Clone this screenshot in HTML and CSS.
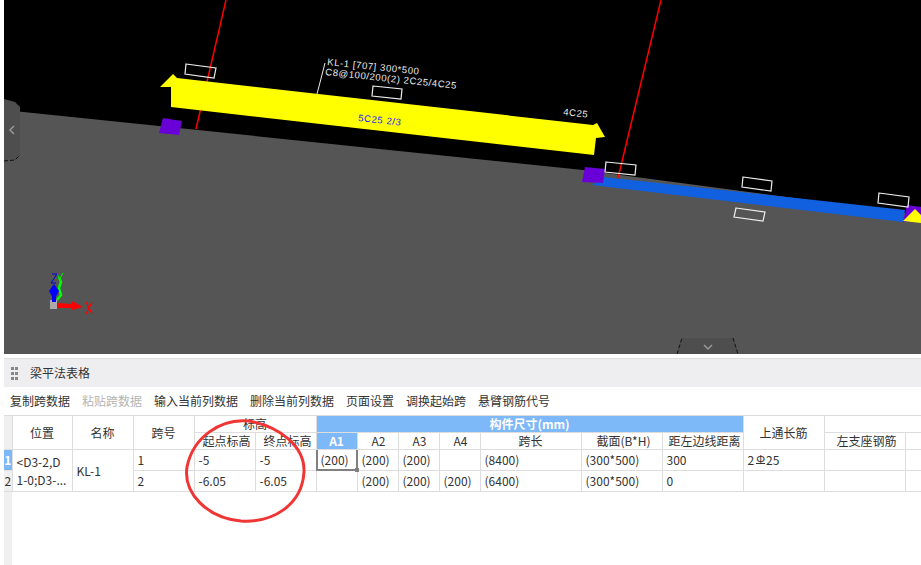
FILE: index.html
```html
<!DOCTYPE html>
<html lang="zh-CN">
<head>
<meta charset="UTF-8">
<title>梁平法表格</title>
<link rel="stylesheet" href="styles.css">
</head>
<body>
<div class="page">
  <!-- 3D view -->
  <svg class="scene" viewBox="4 0 917 354" width="917" height="354">
    <rect class="bg" x="4" y="0" width="917" height="354"/>
    <polygon class="floor" points="4,110 583,170 921,215 921,354 4,354"/>
    <line class="axis" x1="226" y1="0" x2="196" y2="129"/>
    <line class="axis" x1="661" y1="0" x2="618" y2="178"/>
    <polygon class="beam" points="160,87 173,74 177,78 593,125 597,123 605,137 596,138 594,155 171,107 171,87"/>
    <polygon class="beam-b" points="603,177 905,210 903,222 592,185"/>
    <polygon class="col" points="163,118 182,121 179,135 159,133"/>
    <polygon class="col" points="585,167 605,169 603,183 582,182"/>
    <polygon class="col" points="907,205 921,207 921,222 903,222"/>
    <polygon class="beam" points="903,221 915,209 921,215 921,223"/>
    <polygon class="box" points="186,64 216,68 214,78 185,74"/>
    <polygon class="box" points="373,86 402,89 401,99 372,96"/>
    <polygon class="box" points="606,162 636,165 635,175 605,172"/>
    <polygon class="box" points="743,177 772,181 771,191 742,187"/>
    <polygon class="box" points="879,193 909,197 908,207 878,203"/>
    <polygon class="box" points="736,208 765,212 763,221 734,217"/>
    <line class="leader" x1="325" y1="63" x2="317" y2="94"/>
    <text class="lbl" transform="translate(327 65) rotate(6)">KL-1 [707] 300*500</text>
    <text class="lbl" transform="translate(325 75) rotate(6)">C8@100/200(2) 2C25/4C25</text>
    <text class="lbl" transform="translate(563 115) rotate(6)">4C25</text>
    <text class="lbl lbl-b" transform="translate(358 121) rotate(6)">5C25 2/3</text>
    <!-- axis gizmo -->
    <rect class="giz-o" x="50" y="300" width="7" height="9"/>
    <polyline class="giz-y" points="57,300 61,295 59,288 61,282 59,277"/>
    <polyline class="giz-yl" points="57,274 60,278 63,273 60,278 60,282"/>
    <rect class="giz-z" x="52" y="296" width="4" height="6"/>
    <polygon class="giz-z" points="54,284 59,291 54,300 49,291"/>
    <polyline class="giz-zl" points="52,274 57,274 51,283 56,283"/>
    <polygon class="giz-x" points="57,303 72,304 72,301 83,307 72,310 72,308 57,308"/>
    <path class="giz-xl" d="M86 302 L92 314 M92 302 L86 314"/>
    <!-- side tabs -->
    <polygon class="tab" points="4,99 15,102 20,107 20,155 15,160 4,161"/>
    <path class="tab-edge" d="M4 161 L15 160 L20 155"/>
    <path class="chev" d="M14 126 L10 130 L14 134"/>
    <polygon class="tab" points="677,354 682,338 733,338 738,354"/>
    <path class="tab-edge" d="M677 354 L682 338 M733 338 L738 354"/>
    <path class="chev" d="M704 345 L708 349 L712 345"/>
  </svg>

  <div class="panel">
    <div class="panel-head">
      <div class="grip"><i></i><i></i><i></i><i></i><i></i><i></i></div>
      <span>梁平法表格</span>
    </div>
    <div class="toolbar">
      <span class="tool">复制跨数据</span>
      <span class="tool off">粘贴跨数据</span>
      <span class="tool">输入当前列数据</span>
      <span class="tool">删除当前列数据</span>
      <span class="tool">页面设置</span>
      <span class="tool">调换起始跨</span>
      <span class="tool">悬臂钢筋代号</span>
    </div>
    <table class="grid">
      <colgroup>
        <col class="c8"><col class="c60">
        <col class="c61"><col class="c61"><col class="c61"><col class="c61">
        <col class="c41"><col class="c41"><col class="c41"><col class="c41">
        <col class="c101">
        <col class="c81"><col class="c81"><col class="c81"><col class="c81"><col class="c81">
      </colgroup>
      <thead>
        <tr>
          <th class="rh" rowspan="2"></th>
          <th rowspan="2">位置</th>
          <th rowspan="2">名称</th>
          <th rowspan="2">跨号</th>
          <th colspan="2">标高</th>
          <th class="sel" colspan="7">构件尺寸(mm)</th>
          <th rowspan="2">上通长筋</th>
          <th colspan="2"></th>
        </tr>
        <tr>
          <th class="wide">起点标高</th>
          <th class="wide">终点标高</th>
          <th class="sel">A1</th>
          <th class="nudge">A2</th>
          <th class="nudge">A3</th>
          <th class="nudge">A4</th>
          <th>跨长</th>
          <th class="wide">截面(B*H)</th>
          <th class="wide">距左边线距离</th>
          <th class="wide">左支座钢筋</th>
          <th></th>
        </tr>
      </thead>
      <tbody>
        <tr>
          <td class="rh sel">1</td>
          <td class="pos" rowspan="2">&lt;D3-2,D<br>1-0;D3-...</td>
          <td rowspan="2">KL-1</td>
          <td>1</td>
          <td>-5</td>
          <td>-5</td>
          <td class="cur">(200)<div class="cursor"><b></b></div></td>
          <td>(200)</td>
          <td>(200)</td>
          <td></td>
          <td>(8400)</td>
          <td>(300*500)</td>
          <td>300</td>
          <td>2<span class="rebar">Φ</span>25</td>
          <td></td>
          <td></td>
        </tr>
        <tr>
          <td class="rh">2</td>
          <td>2</td>
          <td>-6.05</td>
          <td>-6.05</td>
          <td></td>
          <td>(200)</td>
          <td>(200)</td>
          <td>(200)</td>
          <td>(6400)</td>
          <td>(300*500)</td>
          <td>0</td>
          <td></td>
          <td></td>
          <td></td>
        </tr>
      </tbody>
    </table>
    <div class="gutter"></div>
  </div>

  <!-- hand drawn mark on top of the table -->
  <svg class="mark" width="130" height="110" viewBox="0 0 130 110">
    <path d="M68 4 C40 1 12 20 6 50 C2 76 26 101 60 104 C92 106 121 88 123 55 C124 30 100 10 68 4 Z"/>
  </svg>
</div>
</body>
</html>
```

FILE: styles.css
```css
html, body {
  margin: 0;
  height: 100%;
  overflow: hidden;
  background: #fff;
}
.page {
  position: relative;
  width: 921px;
  height: 565px;
  padding-left: 4px;
  box-sizing: border-box;
  display: flex;
  flex-direction: column;
  font: 12px/16px "Noto Sans CJK SC", "Liberation Sans", sans-serif;
  color: #333;
  overflow: hidden;
}

/* 3D view */
.scene { display: block; flex: none; }
.bg { fill: #000; }
.floor { fill: #555; }
.axis { stroke: #f00; stroke-width: 1.5; }
.beam { fill: #ff0; }
.beam-b { fill: #1060e0; }
.col { fill: #6a00d8; }
.box { fill: none; stroke: #eee; stroke-width: 1.2; }
.leader { stroke: #eee; stroke-width: 1; }
.lbl {
  font: 9.5px "Liberation Sans", sans-serif;
  letter-spacing: .6px;
  fill: #eee;
}
.lbl-b { fill: #1a1aff; }
.giz-o { fill: #aaa; }
.giz-y { fill: none; stroke: #00ff00; stroke-width: 2.5; }
.giz-yl { fill: none; stroke: #00e000; stroke-width: 1; }
.giz-z { fill: #0000ff; }
.giz-zl { fill: none; stroke: #0000e0; stroke-width: 1; }
.giz-x { fill: #f00; }
.giz-xl { fill: none; stroke: #f00; stroke-width: 1.3; }
.tab { fill: #4e4e4e; }
.tab-edge { fill: none; stroke: #111; stroke-width: 1; stroke-dasharray: 4 2; }
.chev { fill: none; stroke: #999; stroke-width: 1.5; }

/* panel */
.panel {
  flex: 1;
  margin-top: 4px;
  border-top: 1px solid #ddd;
  display: flex;
  flex-direction: column;
  min-height: 0;
}
.panel-head {
  height: 28px;
  flex: none;
  display: flex;
  align-items: center;
  background: #eeeef0;
  padding-left: 7px;
}
.grip {
  display: grid;
  grid-template-columns: 3px 3px;
  gap: 2px 1px;
  margin-right: 12px;
}
.grip i { width: 3px; height: 3px; background: #888; }
.toolbar {
  height: 28px;
  flex: none;
  display: flex;
  align-items: center;
  background: #fff;
}
.tool { padding: 0 6px; }
.tool.off { color: #b4b4b4; }

/* table */
.grid {
  flex: none;
  table-layout: fixed;
  border-collapse: collapse;
  width: 982px;
}
.c8 { width: 8px; }
.c41 { width: 41px; }
.c60 { width: 60px; }
.c61 { width: 61px; }
.c81 { width: 81px; }
.c101 { width: 101px; }
.grid th, .grid td {
  border: 1px solid #ddd;
  padding: 0 0 0 4px;
  overflow: hidden;
  white-space: nowrap;
  font-weight: normal;
  text-align: left;
}
.grid th {
  height: 16px;
  text-align: center;
  padding: 0;
}
.grid th.wide { padding-left: 4px; }
.grid th.nudge { padding-left: 2px; }
.grid td { height: 20px; }
.grid .sel {
  background: #7db8f8;
  color: #fff;
  font-weight: bold;
}
.grid .rh {
  padding: 0;
  background: #f0f0f0;
  text-align: center;
  border-left: 0;
}
.grid .rh.sel { background: #7db8f8; }
.grid .pos { line-height: 18px; white-space: nowrap; }
.grid .cur { position: relative; overflow: visible; }
.cursor {
  position: absolute;
  left: -1px;
  top: 0;
  right: -1px;
  bottom: -1px;
  border: 2px solid #808080;
  border-top: 0;
}
.cursor b {
  position: absolute;
  right: -3px;
  bottom: -3px;
  width: 4px;
  height: 4px;
  background: #808080;
}
.rebar {
  display: inline-block;
  font-size: 11px;
  line-height: 10px;
  margin: 0 1px 0 2px;
  border-bottom: 1px solid #333;
  vertical-align: 2px;
}
.gutter {
  flex: 1;
  width: 8px;
  background: #f0f0f0;
}

/* red mark */
.mark {
  position: absolute;
  left: 181px;
  top: 417px;
}
.mark path {
  fill: none;
  stroke: #f03535;
  stroke-width: 3;
}
```
